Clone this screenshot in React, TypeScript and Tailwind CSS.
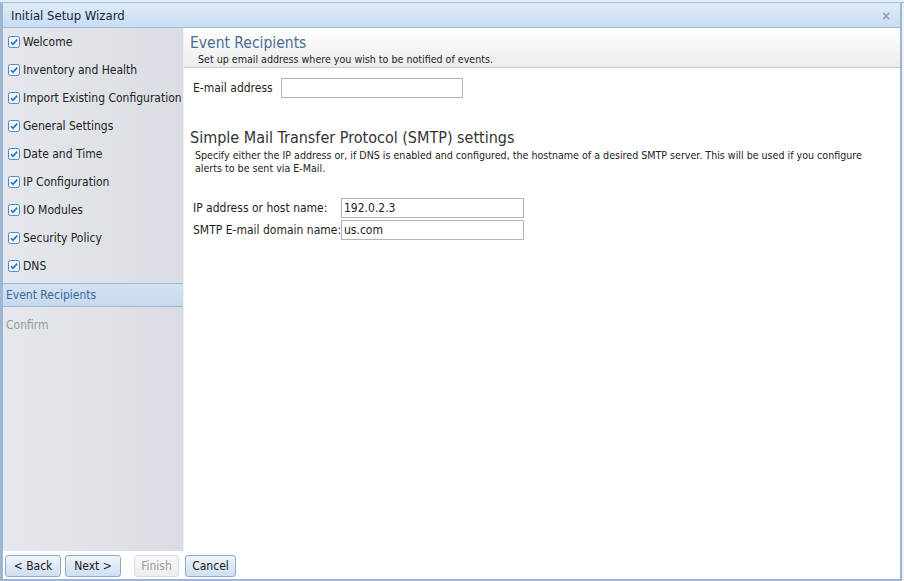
import React from "react";

const steps = [
  "Welcome",
  "Inventory and Health",
  "Import Existing Configuration",
  "General Settings",
  "Date and Time",
  "IP Configuration",
  "IO Modules",
  "Security Policy",
  "DNS",
];

function Check() {
  return (
    <svg width="12" height="12" viewBox="0 0 12 12" className="shrink-0">
      <rect x="0.5" y="0.5" width="11" height="11" rx="2" fill="#eef5fc" stroke="#4d8ac6" />
      <path d="M3 6.2 L5 8.3 L9.2 3.6" fill="none" stroke="#2f6fb5" strokeWidth="1.6" />
    </svg>
  );
}

function Btn({ children, disabled, w }: { children: React.ReactNode; disabled?: boolean; w: string }) {
  return (
    <button
      className={
        (disabled
          ? "h-[22px] rounded-[3px] border border-[#d6dde6] bg-gradient-to-b from-[#f6f7f9] to-[#eceef1] text-[#9a9a9a] text-[12px] leading-none "
          : "h-[22px] rounded-[3px] border border-[#8ea9c9] bg-gradient-to-b from-[#eef4fb] to-[#cfdff1] text-[#1a1a1a] text-[12px] leading-none ") + w
      }
    >
      {children}
    </button>
  );
}

export default function App() {
  return (
    <div className="w-[904px] h-[581px] bg-[#eef3f9] overflow-hidden flex flex-col font-['DejaVu_Sans_Condensed','Liberation_Sans',sans-serif] text-[12px] text-[#1e1e1e]">
      <div className="h-[3px] bg-[#e6eef7] border-b border-[#a9bdd6]" />
      <div className="flex-1 flex flex-col border-l-[3px] border-r-[2px] border-b-[2px] border-[#9eb6d4] bg-white mr-[2px]">
        <div className="h-[25px] flex items-center justify-between bg-gradient-to-b from-[#dfebf8] to-[#c9ddf3] border-b border-[#9fb7d3] pl-[8px] pr-[9px]">
          <span className="text-[13px] text-[#15243a] pt-[1px]">Initial Setup Wizard</span>
          <span className="text-[#8d9aab] text-[13px] font-bold leading-none">×</span>
        </div>
        <div className="flex-1 flex min-h-0">
          <div className="w-[181px] bg-gradient-to-r from-[#e4e7eb] to-[#dadee4] border-r border-[#eef0f3] flex flex-col">
            {steps.map((s) => (
              <div key={s} className="h-[28px] flex items-center gap-[3px] pl-[5px] text-[12px] text-[#222]">
                <Check />
                <span className="whitespace-nowrap">{s}</span>
              </div>
            ))}
            <div className="mt-[3px] h-[24px] flex items-center pl-[3px] bg-gradient-to-b from-[#d3e2f3] to-[#c6d9ef] border-y border-[#9db6d2] text-[#3a6898] text-[12px]">
              Event Recipients
            </div>
            <div className="h-[36px] flex items-center pl-[3px] text-[#9a9a9a] text-[12px]">Confirm</div>
          </div>
          <div className="flex-1 flex flex-col">
            <div className="h-[40px] bg-gradient-to-b from-white to-[#ececec] border-b border-[#c9c9c9] pl-[6px] flex flex-col">
              <div className="text-[15.5px] leading-[20px] mt-[5px] text-[#4a6e94]">Event Recipients</div>
              <div className="text-[10.6px] leading-[13px] pl-[8px] text-[#222]">Set up email address where you wish to be notified of events.</div>
            </div>
            <div className="flex items-center mt-[10px] pl-[9px]">
              <span className="w-[88px]">E-mail address</span>
              <div className="w-[182px] h-[20px] border border-[#b3b3b3] bg-white" />
            </div>
            <div className="text-[16px] leading-[20px] mt-[30px] pl-[6px] text-[#333]">Simple Mail Transfer Protocol (SMTP) settings</div>
            <div className="text-[10.6px] leading-[13px] pl-[11px] pr-[16px] mt-[1px] text-[#222]">
              Specify either the IP address or, if DNS is enabled and configured, the hostname of a desired SMTP server. This will be used if you configure alerts to be sent via E-Mail.
            </div>
            <div className="flex flex-col gap-[2px] mt-[23px] pl-[9px]">
              <div className="flex items-center">
                <span className="w-[148px]">IP address or host name:</span>
                <div className="w-[183px] h-[20px] border border-[#b3b3b3] bg-white flex items-center px-[2px]">192.0.2.3</div>
              </div>
              <div className="flex items-center">
                <span className="w-[148px] whitespace-nowrap">SMTP E-mail domain name:</span>
                <div className="w-[183px] h-[20px] border border-[#b3b3b3] bg-white flex items-center px-[2px]">us.com</div>
              </div>
            </div>
          </div>
        </div>
        <div className="h-[28px] bg-white flex items-center pl-[2px] pt-[2px]">
          <Btn w="w-[56px]">&lt; Back</Btn>
          <span className="w-[4px]" />
          <Btn w="w-[56px]">Next &gt;</Btn>
          <span className="w-[13px]" />
          <Btn disabled w="w-[45px]">Finish</Btn>
          <span className="w-[6px]" />
          <Btn w="w-[51px]">Cancel</Btn>
        </div>
      </div>
    </div>
  );
}
